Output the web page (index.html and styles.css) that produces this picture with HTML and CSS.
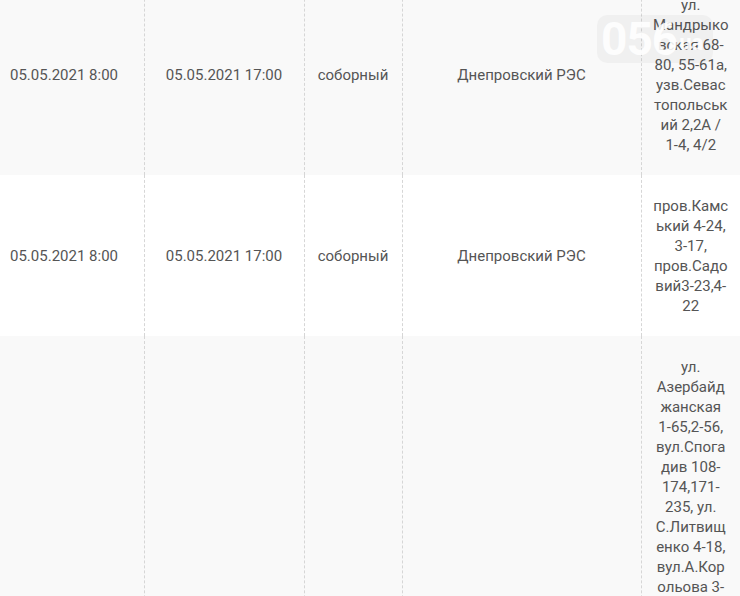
FILE: index.html
```html
<!DOCTYPE html>
<html lang="ru">
<head>
<meta charset="utf-8">
<title>Отключения</title>
<link rel="stylesheet" href="styles.css">
</head>
<body>
<div class="page">
  <div class="watermark" aria-hidden="true">
    <span class="wm-num">056</span><span class="wm-ua">ua</span>
  </div>
  <table class="schedule">
    <colgroup>
      <col class="c1"><col class="c2"><col class="c3"><col class="c4"><col class="c5">
    </colgroup>
    <tbody>
      <tr class="odd">
        <td class="first">05.05.2021 8:00</td>
        <td>05.05.2021 17:00</td>
        <td>соборный</td>
        <td>Днепровский РЭС</td>
        <td class="addr">ул. Мандрыковская 68-80, 55-61а, узв.Севастопольський 2,2А / 1-4, 4/2</td>
      </tr>
      <tr class="even">
        <td class="first">05.05.2021 8:00</td>
        <td>05.05.2021 17:00</td>
        <td>соборный</td>
        <td>Днепровский РЭС</td>
        <td class="addr">пров.Камський 4-24, 3-17, пров.Садовий3-23,4-22</td>
      </tr>
      <tr class="odd">
        <td class="first">05.05.2021 8:00</td>
        <td>05.05.2021 17:00</td>
        <td>соборный</td>
        <td>Днепровский РЭС</td>
        <td class="addr">ул. Азербайджанская 1-65,2-56, вул.Спогадив 108-174,171-235, ул. С.Литвищенко 4-18, вул.А.Корольова 3-15,2-20, вул.Гаванська 1-33,2-40, пров.Гаванський 1-17,2-12, вул.Кожемяки 1-29,2-30, вул.Мостова 3-41,2-36, пров.Мостовий 1-11,2-14, вул.Набережна 5-27,4-22, вул.Річкова 1-19,2-16, пров.Тихий 1-9,2-8</td>
      </tr>
    </tbody>
  </table>
</div>
</body>
</html>
```
FILE: styles.css
```css
html, body {
  margin: 0;
  padding: 0;
  background: #ffffff;
}

.page {
  position: relative;
  width: 740px;
  overflow: hidden;
  height: 596px;
}

.schedule {
  width: 740px;
  margin-top: -26px;
  border-collapse: collapse;
  table-layout: fixed;
  font-family: Roboto, "Noto Sans", sans-serif;
  font-size: 15px;
  line-height: 20px;
  color: #555555;
}

.c1 { width: 144px; }
.c2 { width: 160px; }
.c3 { width: 98px; }
.c4 { width: 239px; }
.c5 { width: 99px; }

.schedule td {
  padding: 20.5px 10px;
  text-align: center;
  vertical-align: middle;
  border-left: 1px dashed #d6d6d6;
  overflow-wrap: break-word;
  word-wrap: break-word;
}

.schedule td.first {
  border-left: none;
  text-align: left;
}

.schedule td.addr {
  padding-left: 11px;
  padding-right: 11px;
}

.odd { background: #f9f9f9; }
.even { background: #ffffff; }

.watermark {
  position: absolute;
  left: 597px;
  top: 15px;
  width: 116px;
  height: 48px;
  border-radius: 10px;
  background: rgba(0, 0, 0, 0.035);
  display: flex;
  align-items: center;
  gap: 2px;
  padding-left: 4px;
  box-sizing: border-box;
  font-family: Roboto, "Noto Sans", sans-serif;
  font-weight: 700;
  color: rgba(255, 255, 255, 0.9);
  z-index: 0;
}

.wm-num {
  font-size: 46px;
  line-height: 48px;
  letter-spacing: -1px;
}

.wm-ua {
  font-size: 22px;
  line-height: 22px;
  margin-top: 8px;
}
```
